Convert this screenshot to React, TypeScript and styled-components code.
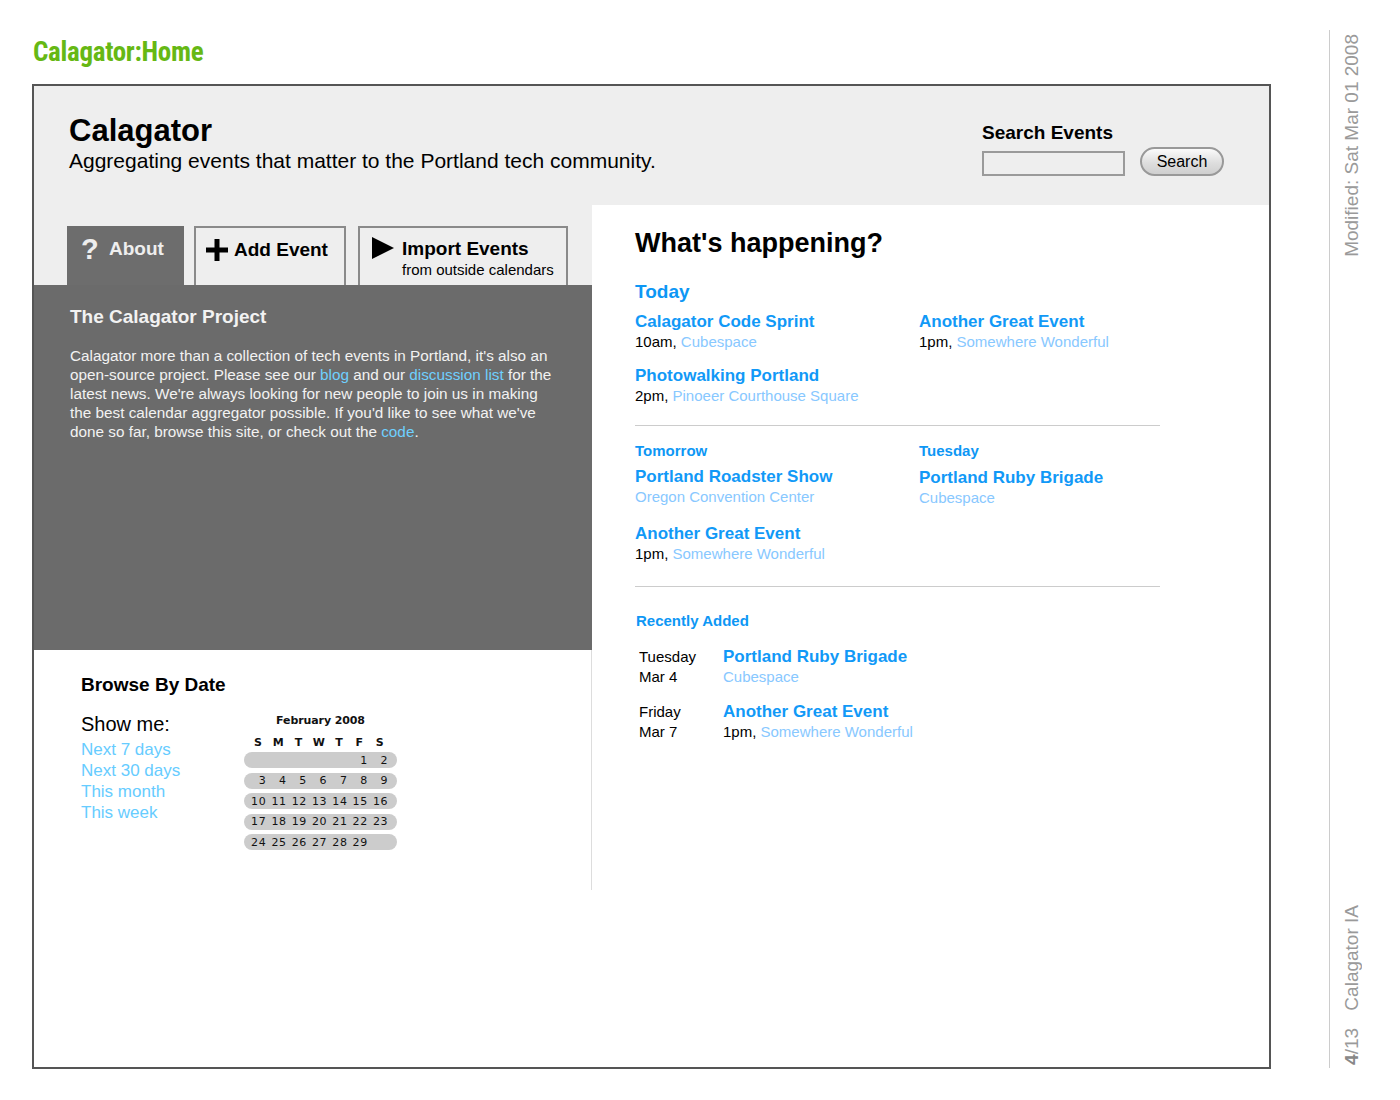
import styled, { createGlobalStyle } from "styled-components";

const GlobalStyle = createGlobalStyle`
  body {
    margin: 0;
    background: #ffffff;
    font-family: "Liberation Sans", Arial, sans-serif;
    color: #000;
  }
`

const SPage = styled.div`
  display: flex;
  align-items: flex-start;
  width: 1400px;
  height: 1100px;
`

const SMain = styled.div`
  display: flex;
  flex-direction: column;
  padding: 36px 0 0 32px;
`

const SPageTitle = styled.h1`
  margin: 0 0 0 1px;
  height: 48px;
  font-family: "Liberation Sans Narrow", "Roboto Condensed", "Liberation Sans", sans-serif;
  font-stretch: condensed;
  font-weight: 700;
  font-size: 27px;
  line-height: 32px;
  color: #66b814;
  letter-spacing: -0.3px;
`

const SFrame = styled.div`
  width: 1235px;
  height: 981px;
  border: 2px solid #555;
  display: flex;
  flex-direction: column;
  background: #fff;
`

const SHeader = styled.div`
  display: flex;
  justify-content: space-between;
  height: 119px;
  background: #eeeeee;
  padding: 0 45px 0 35px;
  box-sizing: border-box;
`

const SBrand = styled.div`
  padding-top: 27px;
`

const SBrandName = styled.div`
  font-size: 31px;
  font-weight: 700;
  line-height: 36px;
`

const STagline = styled.div`
  font-size: 21px;
  line-height: 24px;
`

const SSearch = styled.div`
  padding-top: 36px;
  width: 242px;
`

const SSearchLabel = styled.div`
  font-size: 19px;
  font-weight: 700;
  line-height: 22px;
  margin-bottom: 3px;
`

const SSearchRow = styled.div`
  display: flex;
  align-items: flex-start;
  gap: 15px;
`

const SSearchInput = styled.div`
  width: 139px;
  height: 21px;
  border: 2px solid #9a9a9a;
  background: #eeeeee;
  margin-top: 4px;
`

const SSearchButton = styled.div`
  width: 80px;
  height: 25px;
  border: 2px solid #999;
  border-radius: 15px;
  background: linear-gradient(#fbfbfb, #dedede 55%, #cfcfcf);
  font-size: 16px;
  line-height: 25px;
  text-align: center;
  box-sizing: content-box;
`

const SBody = styled.div`
  display: flex;
  flex: 1;
`

const SLeft = styled.div`
  width: 558px;
  display: flex;
  flex-direction: column;
`

const STabBar = styled.div`
  display: flex;
  align-items: flex-end;
  height: 80px;
  background: #eeeeee;
  padding-left: 33px;
  box-sizing: border-box;
`

const STab = styled.div<{ $active?: boolean; $w: number; $gap: number }>`
  width: ${p => p.$w}px;
  height: 59px;
  margin-right: ${p => p.$gap}px;
  box-sizing: border-box;
  display: flex;
  align-items: flex-start;
  padding: 9px 0 0 12px;
  background: ${p => (p.$active ? "#6d6d6d" : "#eeeeee")};
  border: ${p => (p.$active ? "none" : "2px solid #8a8a8a")};
  border-bottom: none;
  color: ${p => (p.$active ? "#eeeeee" : "#000")};
`

const STabIcon = styled.div`
  width: 24px;
  margin-right: 4px;
  display: flex;
  align-items: center;
  height: 28px;
`

const SQuestion = styled.span`
  font-size: 29px;
  font-weight: 700;
  line-height: 28px;
`

const STabLabel = styled.div`
  font-size: 19px;
  font-weight: 700;
  line-height: 28px;
`

const STabSub = styled.div`
  font-size: 15px;
  line-height: 14px;
`

const SPanel = styled.div`
  height: 365px;
  background: #6b6b6b;
  color: #f2f2f2;
  padding: 21px 0 0 36px;
  box-sizing: border-box;
`

const SPanelTitle = styled.div`
  font-size: 19px;
  font-weight: 700;
  line-height: 22px;
  margin-bottom: 18px;
`

const SPanelText = styled.p`
  margin: 0;
  width: 486px;
  font-size: 15.3px;
  line-height: 19px;
`

const SPanelLink = styled.span`
  color: #6fd0ff;
`

const SBrowse = styled.div`
  display: flex;
  height: 240px;
  box-sizing: border-box;
  padding: 24px 0 0 47px;
  border-right: 1px solid #dddddd;
`

const SBrowseText = styled.div`
  width: 163px;
`

const SBrowseTitle = styled.div`
  font-size: 19px;
  font-weight: 700;
  line-height: 22px;
  margin-bottom: 16px;
`

const SShowMe = styled.div`
  font-size: 20px;
  line-height: 24px;
  margin-bottom: 3px;
`

const SShowLink = styled.div`
  font-size: 17px;
  line-height: 21px;
  color: #66ccff;
`

const SCalendar = styled.div`
  margin-top: 40px;
  width: 153px;
  font-family: "DejaVu Sans", Verdana, sans-serif;
  font-size: 11px;
  color: #111;
`

const SCalTitle = styled.div`
  text-align: center;
  font-weight: 700;
  font-size: 11px;
  line-height: 14px;
  margin-bottom: 6px;
  letter-spacing: -0.1px;
`

const SCalRow = styled.div<{ $pill?: boolean }>`
  display: grid;
  grid-template-columns: repeat(7, 20.3px);
  padding: 0 4px;
  height: 16px;
  align-items: center;
  margin-bottom: ${p => (p.$pill ? "4.5px" : "2px")};
  border-radius: 8px;
  background: ${p => (p.$pill ? "#cccccc" : "transparent")};
  font-weight: ${p => (p.$pill ? 400 : 700)};
  letter-spacing: 0.6px;
`

const SCalCell = styled.div<{ $head?: boolean }>`
  text-align: ${p => (p.$head ? "center" : "right")};
  padding-right: ${p => (p.$head ? "0" : "2px")};
`

const SRight = styled.div`
  flex: 1;
  padding: 21px 0 0 43px;
  display: flex;
  flex-direction: column;
`

const SRightInner = styled.div`
  width: 525px;
`

const SHeading = styled.div`
  font-size: 27px;
  font-weight: 700;
  line-height: 34px;
  margin-bottom: 21px;
`

const SDayTitle = styled.div<{ $size: number }>`
  font-size: ${p => p.$size}px;
  font-weight: 700;
  color: #0d97f5;
  line-height: 22px;
`

const SEventGrid = styled.div<{ $gap: number }>`
  display: grid;
  grid-template-columns: 284px 241px;
  row-gap: ${p => p.$gap}px;
`

const SEvent = styled.div``

const SEventTitle = styled.div`
  font-size: 17px;
  font-weight: 700;
  color: #1199f7;
  line-height: 20px;
`

const SEventMeta = styled.div`
  font-size: 15px;
  line-height: 20px;
  color: #000;
`

const SVenue = styled.span`
  color: #88c8ff;
`

const SDivider = styled.div`
  height: 1px;
  background: #cccccc;
`

const SRecent = styled.div`
  display: grid;
  grid-template-columns: 84px 1fr;
  row-gap: 15px;
  padding-left: 4px;
`

const SRecentDate = styled.div`
  font-size: 15px;
  line-height: 20px;
`

const SSide = styled.div`
  margin: 30px 0 0 58px;
  height: 1038px;
  border-left: 1px solid #cccccc;
  display: flex;
  flex-direction: column;
  justify-content: space-between;
  padding: 4px 0 3px 0;
  box-sizing: border-box;
`

const SSideText = styled.div`
  writing-mode: vertical-rl;
  transform: rotate(180deg);
  font-size: 19px;
  line-height: 22px;
  color: #9a9a9a;
  margin-left: 11px;
  white-space: nowrap;
`

const SSideStrong = styled.b`
  color: #888;
`

const SSideGap = styled.span`
  display: inline-block;
  height: 12px;
`

const events = {
  today: [
    { title: "Calagator Code Sprint", time: "10am", venue: "Cubespace" },
    { title: "Another Great Event", time: "1pm", venue: "Somewhere Wonderful" },
    { title: "Photowalking Portland", time: "2pm", venue: "Pinoeer Courthouse Square" },
  ],
}

const weeks: (number | null)[][] = [
  [null, null, null, null, null, 1, 2],
  [3, 4, 5, 6, 7, 8, 9],
  [10, 11, 12, 13, 14, 15, 16],
  [17, 18, 19, 20, 21, 22, 23],
  [24, 25, 26, 27, 28, 29, null],
]

const EventItem = ({ title, time, venue }: { title: string; time?: string; venue: string }) => (
  <SEvent>
    <SEventTitle>{title}</SEventTitle>
    <SEventMeta>
      {time ? `${time}, ` : ""}
      <SVenue>{venue}</SVenue>
    </SEventMeta>
  </SEvent>
)

export default function App() {
  return (
    <SPage>
      <GlobalStyle />
      <SMain>
        <SPageTitle>Calagator:Home</SPageTitle>
        <SFrame>
          <SHeader>
            <SBrand>
              <SBrandName>Calagator</SBrandName>
              <STagline>Aggregating events that matter to the Portland tech community.</STagline>
            </SBrand>
            <SSearch>
              <SSearchLabel>Search Events</SSearchLabel>
              <SSearchRow>
                <SSearchInput />
                <SSearchButton>Search</SSearchButton>
              </SSearchRow>
            </SSearch>
          </SHeader>
          <SBody>
            <SLeft>
              <STabBar>
                <STab $active $w={117} $gap={10} style={{ paddingLeft: 14 }}>
                  <STabIcon>
                    <SQuestion>?</SQuestion>
                  </STabIcon>
                  <STabLabel>About</STabLabel>
                </STab>
                <STab $w={152} $gap={12} style={{ paddingLeft: 10, paddingTop: 8 }}>
                  <STabIcon>
                    <svg width="22" height="22" viewBox="0 0 22 22">
                      <rect x="8.5" y="0" width="5" height="22" fill="#000" />
                      <rect x="0" y="8.5" width="22" height="5" fill="#000" />
                    </svg>
                  </STabIcon>
                  <STabLabel>Add Event</STabLabel>
                </STab>
                <STab $w={210} $gap={0} style={{ paddingTop: 7 }}>
                  <STabIcon style={{ alignItems: "flex-start", paddingTop: 2, marginRight: 6 }}>
                    <svg width="22" height="22" viewBox="0 0 22 22">
                      <polygon points="0,0 22,11 0,22" fill="#000" />
                    </svg>
                  </STabIcon>
                  <div>
                    <STabLabel>Import Events</STabLabel>
                    <STabSub>from outside calendars</STabSub>
                  </div>
                </STab>
              </STabBar>
              <SPanel>
                <SPanelTitle>The Calagator Project</SPanelTitle>
                <SPanelText>
                  Calagator more than a collection of tech events in Portland, it's also an
                  open-source project. Please see our <SPanelLink>blog</SPanelLink> and our{" "}
                  <SPanelLink>discussion list</SPanelLink> for the latest news. We're always looking
                  for new people to join us in making the best calendar aggregator possible. If
                  you'd like to see what we've done so far, browse this site, or check out the{" "}
                  <SPanelLink>code</SPanelLink>.
                </SPanelText>
              </SPanel>
              <SBrowse>
                <SBrowseText>
                  <SBrowseTitle>Browse By Date</SBrowseTitle>
                  <SShowMe>Show me:</SShowMe>
                  <SShowLink>Next 7 days</SShowLink>
                  <SShowLink>Next 30 days</SShowLink>
                  <SShowLink>This month</SShowLink>
                  <SShowLink>This week</SShowLink>
                </SBrowseText>
                <SCalendar>
                  <SCalTitle>February 2008</SCalTitle>
                  <SCalRow>
                    {["S", "M", "T", "W", "T", "F", "S"].map((d, i) => (
                      <SCalCell key={i} $head>{d}</SCalCell>
                    ))}
                  </SCalRow>
                  {weeks.map((w, i) => (
                    <SCalRow key={i} $pill>
                      {w.map((d, j) => (
                        <SCalCell key={j}>{d ?? ""}</SCalCell>
                      ))}
                    </SCalRow>
                  ))}
                </SCalendar>
              </SBrowse>
            </SLeft>
            <SRight>
              <SRightInner>
                <SHeading>What's happening?</SHeading>
                <SDayTitle $size={19} style={{ marginBottom: 9 }}>Today</SDayTitle>
                <SEventGrid $gap={14}>
                  {events.today.map((e, i) => (
                    <EventItem key={i} {...e} />
                  ))}
                </SEventGrid>
                <SDivider style={{ margin: "19px 0 14px" }} />
                <SEventGrid $gap={16}>
                  <div>
                    <SDayTitle $size={15} style={{ marginBottom: 5 }}>Tomorrow</SDayTitle>
                    <EventItem title="Portland Roadster Show" venue="Oregon Convention Center" />
                  </div>
                  <div>
                    <SDayTitle $size={15} style={{ marginBottom: 6 }}>Tuesday</SDayTitle>
                    <EventItem title="Portland Ruby Brigade" venue="Cubespace" />
                  </div>
                  <EventItem title="Another Great Event" time="1pm" venue="Somewhere Wonderful" />
                </SEventGrid>
                <SDivider style={{ margin: "22px 0 23px" }} />
                <SDayTitle $size={15} style={{ marginBottom: 15, paddingLeft: 1 }}>Recently Added</SDayTitle>
                <SRecent>
                  <SRecentDate>Tuesday<br />Mar 4</SRecentDate>
                  <EventItem title="Portland Ruby Brigade" venue="Cubespace" />
                  <SRecentDate>Friday<br />Mar 7</SRecentDate>
                  <EventItem title="Another Great Event" time="1pm" venue="Somewhere Wonderful" />
                </SRecent>
              </SRightInner>
            </SRight>
          </SBody>
        </SFrame>
      </SMain>
      <SSide>
        <SSideText>Modified: Sat Mar 01 2008</SSideText>
        <SSideText>
          <SSideStrong>4</SSideStrong>/13<SSideGap /> Calagator IA
        </SSideText>
      </SSide>
    </SPage>
  )
}
